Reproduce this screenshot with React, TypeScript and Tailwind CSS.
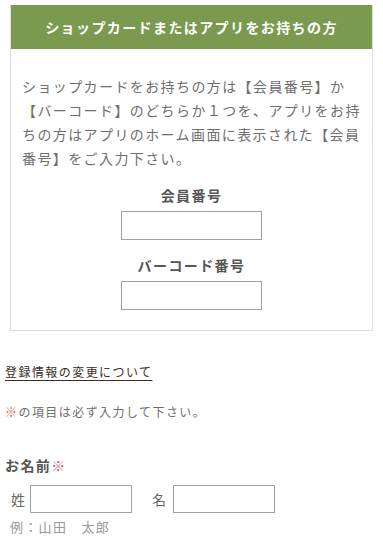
const jp = "font-['Noto_Sans_CJK_JP',sans-serif]";

const App = () => {
  return (
    <div className={`w-[383px] min-h-[546px] bg-white pt-[5px] ${jp}`}>
      <section className="mx-[10px] border border-[#dddddd] border-t-0">
        <h2 className="h-[44px] bg-[#7b9a4f] text-white text-[14px] font-bold tracking-[0.1em] flex items-center justify-center leading-none">
          ショップカードまたはアプリをお持ちの方
        </h2>
        <div className="px-[11px] pt-[25px] pb-[20px]">
          <p className="text-[14px] leading-[24px] tracking-[0.1em] text-[#6e6e6e]">
            ショップカードをお持ちの方は【会員番号】か【バーコード】のどちらか１つを、アプリをお持ちの方はアプリのホーム画面に表示された【会員番号】をご入力下さい。
          </p>
          <div className="flex flex-col items-center">
            <label className="mt-[13px] text-[14px] leading-[24px] font-bold tracking-[0.1em] text-[#555555]">
              会員番号
            </label>
            <input className="mt-[4px] w-[141px] h-[29px] border border-[#a0a0a0] outline-none" />
            <label className="mt-[13px] text-[14px] leading-[24px] font-bold tracking-[0.1em] text-[#555555]">
              バーコード番号
            </label>
            <input className="mt-[4px] w-[141px] h-[29px] border border-[#a0a0a0] outline-none" />
          </div>
        </div>
      </section>

      <div className="px-[5px]">
        <a
          href="#"
          className="inline-block mt-[31px] text-[12px] leading-[20px] tracking-[0.12em] text-[#3a2e26] underline underline-offset-[3px]"
        >
          登録情報の変更について
        </a>
        <p className="mt-[20px] text-[12px] leading-[20px] tracking-[0.12em] text-[#6e6e6e]">
          <span className="text-[#e05555]">※</span>の項目は必ず入力して下さい。
        </p>

        <div className="mt-[33px] text-[14px] leading-[20px] font-bold tracking-[0.1em] text-[#555555]">
          お名前<span className="text-[#e05555] font-normal">※</span>
        </div>
        <div className="mt-[10px] pl-[6px] flex items-center text-[14px] text-[#666666]">
          <span>姓</span>
          <input className="ml-[5px] w-[102px] h-[28px] border border-[#a0a0a0] outline-none" />
          <span className="ml-[20px]">名</span>
          <input className="ml-[7px] w-[102px] h-[28px] border border-[#a0a0a0] outline-none" />
        </div>
        <div className="mt-[4px] pl-[5px] text-[13px] leading-[20px] tracking-[0.1em] text-[#999999]">
          例：山田　太郎
        </div>
      </div>
    </div>
  );
};

export default App;
